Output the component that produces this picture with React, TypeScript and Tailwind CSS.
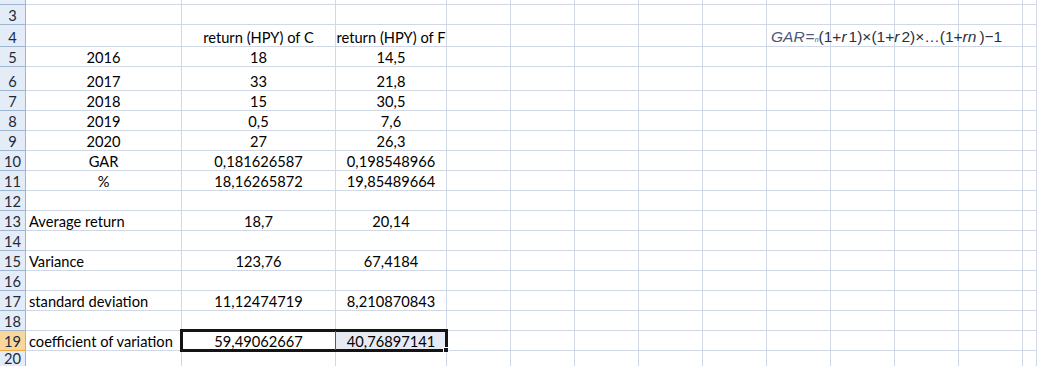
import React from "react";

type Row = {
  num: string;
  h: string;
  a?: string;
  aLeft?: boolean;
  b?: string;
  c?: string;
  selected?: boolean;
};

const rows: Row[] = [
  { num: "", h: "h-[5px]" },
  { num: "3", h: "h-[20px]" },
  { num: "4", h: "h-[22px]", b: "return (HPY) of C", c: "return (HPY) of F" },
  { num: "5", h: "h-[20px]", a: "2016", b: "18", c: "14,5" },
  { num: "6", h: "h-[24px]", a: "2017", b: "33", c: "21,8" },
  { num: "7", h: "h-[20px]", a: "2018", b: "15", c: "30,5" },
  { num: "8", h: "h-[20px]", a: "2019", b: "0,5", c: "7,6" },
  { num: "9", h: "h-[20px]", a: "2020", b: "27", c: "26,3" },
  { num: "10", h: "h-[20px]", a: "GAR", b: "0,181626587", c: "0,198548966" },
  { num: "11", h: "h-[20px]", a: "%", b: "18,16265872", c: "19,85489664" },
  { num: "12", h: "h-[20px]" },
  { num: "13", h: "h-[20px]", a: "Average return", aLeft: true, b: "18,7", c: "20,14" },
  { num: "14", h: "h-[20px]" },
  { num: "15", h: "h-[20px]", a: "Variance", aLeft: true, b: "123,76", c: "67,4184" },
  { num: "16", h: "h-[20px]" },
  { num: "17", h: "h-[20px]", a: "standard deviation", aLeft: true, b: "11,12474719", c: "8,210870843" },
  { num: "18", h: "h-[20px]" },
  { num: "19", h: "h-[20px]", a: "coefficient of variation", aLeft: true, b: "59,49062667", c: "40,76897141", selected: true },
  { num: "20", h: "h-[16px]" },
];

const cell = "border-r border-b border-[#d0d7e5] flex items-end px-[3px] whitespace-nowrap overflow-visible";

export default function App() {
  return (
    <div
      className="relative w-[1037px] h-[366px] overflow-hidden bg-white text-[14.67px] leading-[16px] text-black"
      style={{ fontFamily: "Lato, 'Open Sans', sans-serif" }}
    >
      {rows.map((r, i) => (
        <div
          key={i}
          className={`grid grid-cols-[26px_156px_154px_111px_64px_64px_64px_64px_64px_64px_64px_64px_64px_1fr] ${r.h}`}
        >
          <div
            className={`border-r border-b flex items-end justify-center text-[#1c2a3c] ${
              r.selected
                ? "bg-[#f9d79a] border-b-[#f0a94a] border-r-[#9eb6ce]"
                : "bg-[#e4ecf7] border-[#9eb6ce]"
            }`}
          >
            {r.num}
          </div>
          <div className={`${cell} ${r.aLeft ? "justify-start" : "justify-center"}`}>{r.a}</div>
          <div className={`${cell} justify-center`}>{r.b}</div>
          <div className={`${cell} justify-center ${r.selected ? "bg-[#e7eaf3]" : ""}`}>{r.c}</div>
          {Array.from({ length: 10 }).map((_, k) => (
            <div key={k} className={cell} />
          ))}
        </div>
      ))}

      {/* selection outline B19:C19 */}
      <div className="absolute left-[180px] top-[329px] w-[268px] h-[23px] border-[3px] border-[#141414] pointer-events-none" />
      <div className="absolute left-[335px] top-[331px] w-px h-[19px] bg-[#5a5a5a]" />
      <div className="absolute left-[443px] top-[347px] w-[6px] h-[6px] bg-[#141414] border border-white" />

      {/* formula object */}
      <div
        className="absolute left-[771px] top-[28px] text-[15.5px] leading-[18px] whitespace-nowrap text-[#2c313b] flex items-baseline"
        style={{ fontFamily: "'Liberation Sans', Arial, sans-serif" }}
      >
        <span className="italic text-[#4a5a78]">GAR</span>
        <span className="text-[#4a5a78] ml-[1px]">=</span>
        <span className="italic text-[7px] text-[#4a5a78]">n</span>
        <span>(1+</span>
        <span className="italic">r</span>
        <span className="ml-[2px]">1)×(1+</span>
        <span className="italic">r</span>
        <span className="ml-[2px]">2)×…(1+</span>
        <span className="italic">rn</span>
        <span className="ml-[3px]">)−1</span>
      </div>
    </div>
  );
}
